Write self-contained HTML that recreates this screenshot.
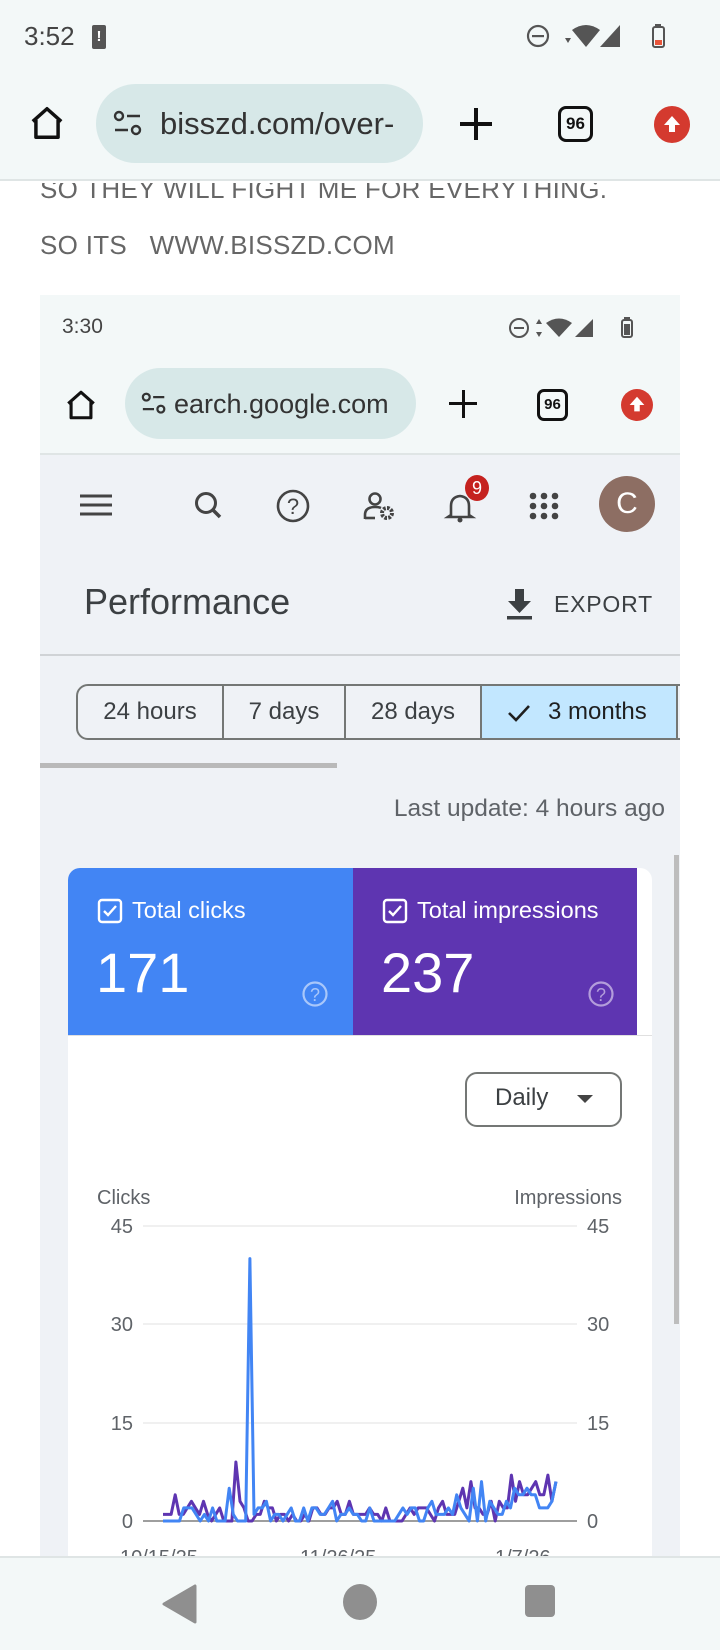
<!DOCTYPE html>
<html><head><meta charset="utf-8"><style>
*{margin:0;padding:0;box-sizing:border-box}
body{width:720px;height:1650px;overflow:hidden;background:#fff;font-family:"Liberation Sans",sans-serif;position:relative}
.a{position:absolute}
.t{white-space:nowrap}
</style></head><body>
<div class="a" style="left:0;top:0;width:720px;height:181px;background:#f3f8f8;border-bottom:2px solid #dfe5e5"></div>
<div class="a t" style="left:24px;top:21px;font-size:26px;color:#444">3:52</div>
<div class="a" style="left:92px;top:25px;width:14px;height:24px;background:#555;border-radius:2px;color:#fff;font-size:15px;font-weight:bold;text-align:center;line-height:24px">!</div>
<svg class="a" style="left:520px;top:22px" width="150" height="30" viewBox="0 0 150 30">
<circle cx="18" cy="14" r="10" fill="none" stroke="#555" stroke-width="2.2"/><rect x="12" y="13" width="12" height="2.2" fill="#555"/>
<path d="M45 16l6 0-3 5z" fill="#555"/>
<path d="M52 8q14-10 28 0l-14 17z" fill="#555"/>
<path d="M100 3v22h-20z" fill="#555"/>
<rect x="133" y="5" width="11" height="20" rx="2" fill="none" stroke="#555" stroke-width="2"/><rect x="135" y="2" width="6" height="3" fill="#555"/><rect x="135" y="18" width="7" height="5" fill="#e8553a"/>
</svg>
<svg class="a" style="left:28px;top:104px" width="38" height="38" viewBox="0 0 24 24"><path d="M3 11L12 3l9 8M5 10v11h14V10" fill="none" stroke="#111" stroke-width="2.2" stroke-linejoin="round"/></svg>
<div class="a" style="left:96px;top:84px;width:327px;height:79px;background:#d7e8e8;border-radius:40px"></div>
<svg class="a" style="left:112px;top:110px" width="32" height="28" viewBox="0 0 32 28"><circle cx="7" cy="6" r="4" fill="none" stroke="#333" stroke-width="2.4"/><path d="M15 6h13M3 20h13" stroke="#333" stroke-width="2.4"/><circle cx="24" cy="20" r="4" fill="none" stroke="#333" stroke-width="2.4"/></svg>
<div class="a t" style="left:160px;top:106px;font-size:31px;color:#333">bisszd.com/over-</div>
<div class="a" style="left:460px;top:122px;width:32px;height:3.5px;background:#111"></div>
<div class="a" style="left:474px;top:108px;width:3.5px;height:32px;background:#111"></div>
<div class="a" style="left:558px;top:106px;width:35px;height:36px;border:3.5px solid #111;border-radius:8px;font-size:17px;font-weight:bold;text-align:center;line-height:29px;color:#111">96</div>
<div class="a" style="left:654px;top:106px;width:36px;height:37px;border-radius:50%;background:#d43a2f"></div>
<svg class="a" style="left:660px;top:113px" width="24" height="24" viewBox="0 0 24 24"><path d="M12 3l8 9h-5v7h-6v-7H4z" fill="#fff"/></svg>

<div class="a" style="left:0;top:183px;width:720px;height:1373px;background:#fff;overflow:hidden">
<div class="a t" style="left:40px;top:-9px;font-size:26px;color:#666;letter-spacing:0.3px">SO THEY WILL FIGHT ME FOR EVERYTHING.</div>
<div class="a t" style="left:40px;top:47px;font-size:26px;color:#666;letter-spacing:0.3px">SO ITS &nbsp; WWW.BISSZD.COM</div>
</div>

<div class="a" style="left:40px;top:295px;width:640px;height:1261px;background:#eff2f6;overflow:hidden">
 <div class="a" style="left:0;top:0;width:640px;height:160px;background:#f3f8f8;border-bottom:2px solid #dfe5e5"></div>
 <div class="a t" style="left:22px;top:20px;font-size:21px;color:#444">3:30</div>
 <svg class="a" style="left:465px;top:20px" width="150" height="26" viewBox="0 0 150 26">
 <circle cx="14" cy="13" r="9" fill="none" stroke="#555" stroke-width="2"/><rect x="9" y="12" width="10" height="2" fill="#555"/>
 <path d="M34 4l3 5h-6zM34 22l3-5h-6z" fill="#555"/>
 <path d="M41 8q13-9 26 0l-13 14z" fill="#555"/>
 <path d="M88 4v18h-18z" fill="#555"/>
 <rect x="117" y="5" width="10" height="17" rx="2" fill="none" stroke="#555" stroke-width="2"/><rect x="119" y="2" width="6" height="3" fill="#555"/><rect x="119" y="9" width="6" height="11" fill="#555"/>
 </svg>
 <svg class="a" style="left:24px;top:93px" width="34" height="34" viewBox="0 0 24 24"><path d="M3 11L12 3l9 8M5 10v11h14V10" fill="none" stroke="#111" stroke-width="2.2" stroke-linejoin="round"/></svg>
 <div class="a" style="left:85px;top:73px;width:291px;height:71px;background:#d7e8e8;border-radius:36px"></div>
 <svg class="a" style="left:100px;top:97px" width="28" height="24" viewBox="0 0 32 28"><circle cx="7" cy="6" r="4" fill="none" stroke="#333" stroke-width="2.6"/><path d="M15 6h13M3 20h13" stroke="#333" stroke-width="2.6"/><circle cx="24" cy="20" r="4" fill="none" stroke="#333" stroke-width="2.6"/></svg>
 <div class="a t" style="left:134px;top:94px;width:240px;overflow:hidden;font-size:27px;color:#333">earch.google.com</div>
 <div class="a" style="left:409px;top:107px;width:28px;height:3px;background:#111"></div>
 <div class="a" style="left:421.5px;top:95px;width:3px;height:28px;background:#111"></div>
 <div class="a" style="left:497px;top:94px;width:31px;height:32px;border:3px solid #111;border-radius:7px;font-size:15px;font-weight:bold;text-align:center;line-height:26px;color:#111">96</div>
 <div class="a" style="left:581px;top:94px;width:32px;height:32px;border-radius:50%;background:#d43a2f"></div>
 <svg class="a" style="left:586px;top:99px" width="22" height="22" viewBox="0 0 24 24"><path d="M12 3l8 9h-5v7h-6v-7H4z" fill="#fff"/></svg>

 <svg class="a" style="left:38px;top:193px" width="560" height="36" viewBox="0 0 560 36">
  <path d="M2 8h32M2 17h32M2 26h32" stroke="#444" stroke-width="3"/>
  <circle cx="128" cy="15" r="9.5" fill="none" stroke="#444" stroke-width="3"/><path d="M134 21l8 8" stroke="#444" stroke-width="3.5"/>
  <circle cx="215" cy="18" r="15" fill="none" stroke="#444" stroke-width="2.6"/>
  <text x="215" y="26" font-size="22" text-anchor="middle" fill="#444" font-family="Liberation Sans">?</text>
  <circle cx="297" cy="11" r="5.5" fill="none" stroke="#444" stroke-width="2.6"/>
  <path d="M287 31v-4q0-8 10-8q4 0 6 1" fill="none" stroke="#444" stroke-width="2.6"/>
  <path d="M287 30h10" stroke="#444" stroke-width="2.6"/>
  <circle cx="309" cy="25" r="5" fill="none" stroke="#444" stroke-width="4" stroke-dasharray="2.6 1.3"/>
  <path d="M373 27v-9q0-9 9-10q9 1 9 10v9l3 2h-24z" fill="none" stroke="#444" stroke-width="2.6"/>
  <circle cx="382" cy="32" r="2.5" fill="#444"/>
  <g fill="#444"><circle cx="455" cy="8" r="3.3"/><circle cx="466" cy="8" r="3.3"/><circle cx="477" cy="8" r="3.3"/><circle cx="455" cy="18" r="3.3"/><circle cx="466" cy="18" r="3.3"/><circle cx="477" cy="18" r="3.3"/><circle cx="455" cy="28" r="3.3"/><circle cx="466" cy="28" r="3.3"/><circle cx="477" cy="28" r="3.3"/></g>
 </svg>
 <div class="a" style="left:425px;top:180px;width:24px;height:26px;border-radius:50%;background:#c5221f;color:#fff;font-size:18px;text-align:center;line-height:26px">9</div>
 <div class="a" style="left:559px;top:181px;width:56px;height:56px;border-radius:50%;background:#8d6e63;color:#fff;font-size:30px;text-align:center;line-height:56px">C</div>
 <div class="a t" style="left:44px;top:286px;font-size:36px;color:#3c4043">Performance</div>
 <svg class="a" style="left:465px;top:292px" width="30" height="34" viewBox="0 0 30 34"><path d="M10 2h9v12h7L14.5 26 3 14h7z" fill="#3c4043"/><rect x="2" y="29" width="25" height="3.5" fill="#3c4043"/></svg>
 <div class="a t" style="left:514px;top:296px;font-size:23px;color:#3c4043;letter-spacing:0.8px">EXPORT</div>
 <div class="a" style="left:0;top:359px;width:640px;height:2px;background:#d0d3d6"></div>
 <div class="a" style="left:36px;top:389px;width:620px;height:56px;border:2px solid #747775;border-radius:12px;background:#eff2f6;overflow:hidden">
  <div class="a t" style="left:0;top:0;width:146px;height:52px;line-height:52px;text-align:center;font-size:24px;color:#3c4043;border-right:2px solid #747775">24 hours</div>
  <div class="a t" style="left:146px;top:0;width:122px;height:52px;line-height:52px;text-align:center;font-size:24px;color:#3c4043;border-right:2px solid #747775">7 days</div>
  <div class="a t" style="left:268px;top:0;width:136px;height:52px;line-height:52px;text-align:center;font-size:24px;color:#3c4043;border-right:2px solid #747775">28 days</div>
  <div class="a t" style="left:404px;top:0;width:196px;height:52px;line-height:52px;font-size:24px;color:#1f1f1f;background:#c2e7ff;border-right:2px solid #747775;padding-left:66px">3 months</div>
  <svg class="a" style="left:428px;top:14px" width="26" height="24" viewBox="0 0 26 24"><path d="M3 13l7 7L23 6" fill="none" stroke="#1f1f1f" stroke-width="2.6"/></svg>
 </div>
 <div class="a" style="left:0;top:468px;width:297px;height:5px;background:#b9b9b9"></div>
 <div class="a t" style="right:15px;top:500px;font-size:24.5px;color:#5f6368">Last update: 4 hours ago</div>
 <div class="a" style="left:634px;top:560px;width:5px;height:469px;background:#bdbdbd"></div>
 <div class="a" style="left:28px;top:573px;width:584px;height:700px;background:#fff;border-radius:12px 12px 0 0;overflow:hidden">
  <div class="a" style="left:0;top:0;width:285px;height:167px;background:#4285f4"></div>
  <div class="a" style="left:285px;top:0;width:284px;height:167px;background:#5e35b1"></div>
  <svg class="a" style="left:29px;top:30px" width="26" height="26" viewBox="0 0 26 26"><rect x="2" y="2" width="22" height="22" rx="3" fill="none" stroke="#fff" stroke-width="2.4"/><path d="M7 13l4 4 8-9" fill="none" stroke="#fff" stroke-width="2.4"/></svg>
  <div class="a t" style="left:64px;top:29px;font-size:23.5px;color:#fff">Total clicks</div>
  <div class="a t" style="left:28px;top:72px;font-size:56px;color:#fff">171</div>
  <svg class="a" style="left:233px;top:112px" width="28" height="28" viewBox="0 0 28 28"><circle cx="14" cy="14" r="11.5" fill="none" stroke="#a9c7fa" stroke-width="2.2"/><text x="14" y="21" font-size="18" text-anchor="middle" fill="#a9c7fa" font-family="Liberation Sans">?</text></svg>
  <svg class="a" style="left:314px;top:30px" width="26" height="26" viewBox="0 0 26 26"><rect x="2" y="2" width="22" height="22" rx="3" fill="none" stroke="#fff" stroke-width="2.4"/><path d="M7 13l4 4 8-9" fill="none" stroke="#fff" stroke-width="2.4"/></svg>
  <div class="a t" style="left:349px;top:29px;font-size:23.5px;color:#fff">Total impressions</div>
  <div class="a t" style="left:313px;top:72px;font-size:56px;color:#fff">237</div>
  <svg class="a" style="left:519px;top:112px" width="28" height="28" viewBox="0 0 28 28"><circle cx="14" cy="14" r="11.5" fill="none" stroke="#b39ddb" stroke-width="2.2"/><text x="14" y="21" font-size="18" text-anchor="middle" fill="#b39ddb" font-family="Liberation Sans">?</text></svg>
  <div class="a" style="left:0;top:167px;width:584px;height:1px;background:#e0e0e0"></div>
  <div class="a" style="left:397px;top:204px;width:157px;height:55px;border:2px solid #747775;border-radius:12px"></div>
  <div class="a t" style="left:427px;top:216px;font-size:24px;color:#3c4043">Daily</div>
  <svg class="a" style="left:508px;top:226px" width="18" height="10" viewBox="0 0 18 10"><path d="M1 1h16l-8 8z" fill="#444"/></svg>
 </div>
</div>

<svg class="a" style="left:0;top:1180px" width="720" height="376" viewBox="0 1180 720 376">
 <text x="97" y="1204" font-size="20" fill="#5f6368" font-family="Liberation Sans">Clicks</text>
 <text x="622" y="1204" font-size="20" fill="#5f6368" text-anchor="end" font-family="Liberation Sans">Impressions</text>
 <g font-size="20" fill="#5f6368" font-family="Liberation Sans">
 <text x="133" y="1233" text-anchor="end">45</text><text x="133" y="1331" text-anchor="end">30</text><text x="133" y="1430" text-anchor="end">15</text><text x="133" y="1528" text-anchor="end">0</text>
 <text x="587" y="1233">45</text><text x="587" y="1331">30</text><text x="587" y="1430">15</text><text x="587" y="1528">0</text>
 <text x="120" y="1564">10/15/25</text><text x="300" y="1564">11/26/25</text><text x="495" y="1564">1/7/26</text>
 </g>
 <g stroke="#ececec" stroke-width="1.5"><path d="M143 1226H577M143 1324H577M143 1423H577"/></g>
 <path d="M143 1521H577" stroke="#9e9e9e" stroke-width="2"/>
 <polyline id="pp" fill="none" stroke="#5e35b1" stroke-width="3" stroke-linejoin="round"/>
 <polyline id="bp" fill="none" stroke="#4285f4" stroke-width="3" stroke-linejoin="round"/>
</svg>

<div class="a" style="left:0;top:1556px;width:720px;height:94px;background:#f3f8f8;border-top:2px solid #dfe5e5"></div>
<svg class="a" style="left:160px;top:1580px" width="420" height="48" viewBox="0 0 420 48">
 <path d="M35 6v36L4 24z" fill="#8f8f8f" stroke="#8f8f8f" stroke-width="3" stroke-linejoin="round"/>
 <ellipse cx="200" cy="22" rx="17" ry="18" fill="#8f8f8f"/>
 <rect x="365" y="5" width="30" height="32" rx="4" fill="#8f8f8f"/>
</svg>
<script>
var P=[1,1,1,4,1,1,2,3,2,1,3,1,0,1,2,0,0,0,9,3,2,0,0,1,1,3,2,2,0,1,1,0,1,0,0,1,0,2,2,1,1,2,2,3,1,1,3,1,1,1,1,2,1,1,0,2,0,0,0,0,1,2,1,2,2,2,1,0,2,3,1,1,1,3,5,2,6,2,2,1,1,3,0,3,2,2,7,3,6,4,4,5,6,4,4,7,3,6];
var B=[0,0,0,0,0,2,2,2,1,0,1,0,2,0,0,0,5,1,0,0,0,40,1,2,2,3,0,1,1,0,1,2,0,0,2,0,2,2,1,1,2,3,0,1,1,2,1,1,0,0,2,0,0,0,0,0,0,1,2,1,2,2,0,0,2,3,1,1,1,2,1,4,2,1,0,5,0,6,0,3,2,1,1,3,2,5,4,4,5,4,4,2,2,2,3,6];
function pts(a){var s=[];for(var i=0;i<a.length;i++){s.push((163+i*393/(a.length-1)).toFixed(1)+","+(1521-a[i]*6.56).toFixed(1));}return s.join(" ");}
document.getElementById("pp").setAttribute("points",pts(P));
document.getElementById("bp").setAttribute("points",pts(B));
</script>
</body></html>
